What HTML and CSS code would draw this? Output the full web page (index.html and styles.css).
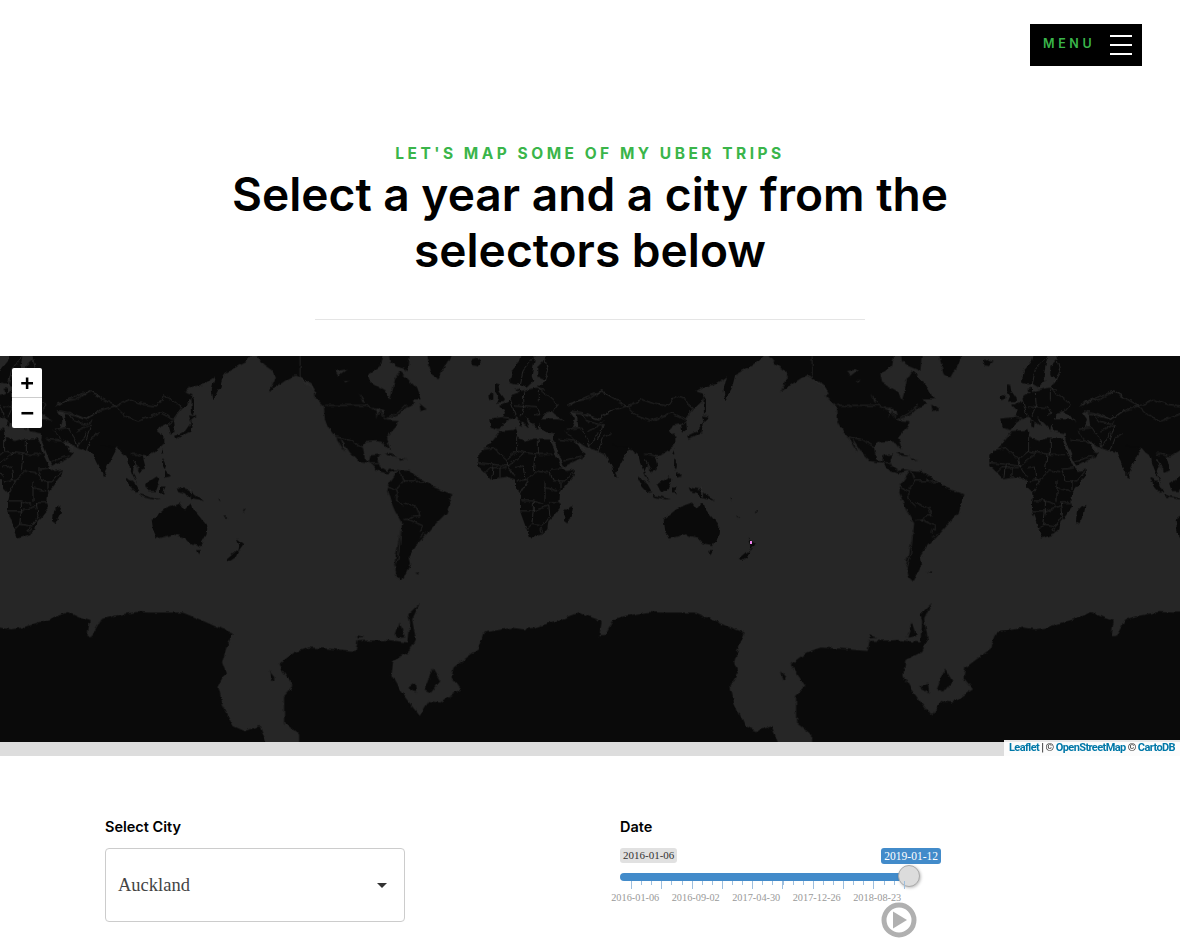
FILE: index.html
```html
<!DOCTYPE html>
<html>
<head>
<title>Uber trips</title>
<link rel="stylesheet" href="styles.css">
</head>
<body>

<div class="topbar">
  <div class="menu-btn">
    <span class="menu-label">MENU</span>
    <span class="burger"><i></i><i></i><i></i></span>
  </div>
</div>

<div class="intro">
  <div class="eyebrow">LET'S MAP SOME OF MY UBER TRIPS</div>
  <h1>Select a year and a city from the<br>selectors below</h1>
  <div class="rule"></div>
</div>

<div class="map">
  <svg class="world" viewBox="0 0 3540 1158" width="1180" height="386">
    <defs>
      <filter id="coast" filterUnits="userSpaceOnUse" x="-60" y="-60" width="3660" height="1300" color-interpolation-filters="sRGB">
        <feTurbulence type="fractalNoise" baseFrequency=".05" numOctaves="3" seed="4" result="noise"/>
        <feDisplacementMap in="SourceGraphic" in2="noise" scale="14" xChannelSelector="R" yChannelSelector="G"/>
        <feGaussianBlur stdDeviation="1"/>
      </filter>
      <g id="tile">
        <!-- antarctica -->
        <g transform="scale(1.129 1)" class="land">
          <path d="M-3,815 L30,820 L60,815 L100,800 L130,790 L180,768 L210,785 L238,795 L232,840 L245,840 L270,790 L300,780 L360,768 L400,770 L485,770 L530,790 L570,810 L618,830 L600,880 L590,920 L600,950 L580,990 L590,1040 L620,1110 L650,1125 L690,1110 L720,1200 L-3,1200 Z"/>
          <path d="M795,1200 L795,1135 L755,1100 L755,1020 L780,990 L740,925 L782,890 L820,875 L870,878 L945,885 L950,855 L1030,852 L1085,860 L1090,800 L1085,775 L1115,742 L1095,790 L1105,850 L1090,885 L1045,912 L1040,960 L1060,1000 L1115,1080 L1140,1035 L1170,1040 L1225,1000 L1200,965 L1205,935 L1270,880 L1285,830 L1360,815 L1362,1200 Z"/>
          <path d="M1062,800 L1075,840 L1050,845 Z"/>
          <path d="M1150,938 L1170,975 L1145,1010 L1128,1000 Z"/>
          <path d="M1085,995 L1105,980 L1108,1010 Z"/>
          <path d="M715,945 L730,965 L722,975 Z"/>
          <path d="M950,838 L970,845 L950,847 Z"/>
        </g>
        <!-- americas -->
        <g transform="translate(900 0)">
          <g class="land">
            <path d="M-145,-20 L-110,25 L-85,42 L-72,62 L-92,106 L-35,68 L-15,58 L5,68 L35,85 L50,110 L42,120 L72,150 L75,195 L95,228 L108,243 L135,288 L120,245 L150,290 L175,315 L210,320 L235,345 L262,352 L295,342 L275,340 L262,345 L240,330 L232,310 L240,295 L215,298 L210,315 L195,310 L188,270 L195,258 L225,255 L250,258 L262,275 L270,280 L258,245 L290,210 L292,195 L255,193 L300,172 L318,155 L345,145 L335,130 L365,130 L345,92 L322,68 L300,45 L285,70 L280,95 L270,130 L255,105 L210,80 L205,55 L240,30 L250,-20 Z"/>
            <path d="M265,-20 L330,-20 L325,45 L290,30 L270,15 Z"/>
            <path d="M378,-20 L395,55 L415,67 L462,-20 Z"/>
            <path d="M358,142 L380,160 L362,165 Z"/>
            <path d="M250,290 L272,292 L292,302 L265,298 Z"/>
            <path d="M296,308 L322,310 L300,314 Z"/>
            <path d="M295,342 L330,345 L355,365 L385,380 L400,395 L457,415 L440,470 L405,505 L370,545 L345,570 L325,600 L330,625 L305,675 L290,660 L283,625 L295,560 L305,500 L285,465 L262,410 L265,385 Z"/>
            <path d="M345,648 L360,646 L356,652 Z"/>
          </g>
          <g class="sea">
            <path d="M105,45 L140,40 L115,60 Z"/>
            <path d="M132,72 L150,72 L135,80 Z"/>
            <path d="M178,112 L195,138 L188,140 Z"/>
            <path d="M230,155 L240,155 L232,190 Z"/>
            <path d="M212,150 L250,162 L255,182 L240,165 Z"/>
          </g>
          <path class="line" d="M0,0 L0,65 L40,100 M75,148 L200,148 L235,165 L255,190 L300,165 L320,145 M108,243 L150,250 L190,275 M212,320 L235,320 M297,342 L310,375 L290,400 M310,375 L350,375 L345,368 M350,380 L385,375 M262,392 L290,405 L290,430 L310,450 M310,440 L350,455 L360,480 L340,480 L325,490 M310,490 L325,490 L370,510 L360,530 M305,500 L295,600 L285,640 M360,545 L375,530"/>
        </g>
        <!-- europe, africa, west asia -->
        <g transform="translate(1410 0)">
          <g class="land">
            <path d="M88,225 L130,222 L138,218 L142,228 L140,245 L170,255 L195,248 L240,248 L245,260 L258,300 L275,335 L288,345 L315,340 L310,360 L290,385 L270,410 L268,440 L270,455 L250,480 L235,495 L232,520 L215,535 L180,547 L170,520 L150,465 L150,440 L155,415 L135,395 L135,370 L110,362 L65,370 L45,350 L25,330 L25,295 L60,262 Z"/>
            <path d="M310,447 L305,475 L292,502 L282,495 L285,465 L300,450 Z"/>
            <path d="M58,188 L100,183 L105,165 L90,150 L115,138 L122,118 L150,108 L172,102 L200,95 L210,85 L228,70 L205,62 L205,30 L225,10 L222,-20 L560,-20 L560,270 L510,265 L480,270 L470,290 L436,355 L405,292 L390,287 L362,278 L340,268 L315,250 L335,285 L348,290 L335,305 L282,332 L250,252 L252,232 L215,225 L208,200 L205,222 L190,205 L165,180 L180,215 L140,182 L125,185 L100,203 L85,222 L62,215 Z"/>
            <path d="M120,80 L125,45 L150,15 L160,-20 L200,-20 L190,30 L185,60 L190,75 L170,95 L155,85 L135,85 Z"/>
            <path d="M135,100 L150,95 L150,110 Z"/>
            <path d="M75,82 L85,85 L88,105 L105,130 L98,138 L78,140 L85,122 L75,105 Z"/>
            <path d="M55,120 L70,112 L70,128 L58,132 Z"/>
            <path d="M0,15 L20,8 L35,15 L20,30 L5,28 Z"/>
            <path d="M148,195 L158,195 L156,215 L148,212 Z"/>
            <path d="M432,350 L442,362 L434,362 Z" />
          </g>
          <g class="sea">
            <path d="M215,190 L225,170 L245,165 L255,175 L285,195 L265,190 L235,190 Z"/>
            <path d="M298,165 L320,170 L325,210 L305,215 L315,190 Z"/>
          </g>
          <path class="line" d="M88,230 L60,262 M140,245 L140,285 L110,310 M205,250 L205,295 L250,295 M140,285 L165,290 L205,295 M195,295 L190,345 M110,310 L115,335 M110,310 L70,275 L40,280 L25,295 M25,320 L70,325 L115,330 L165,290 M115,330 L135,360 M135,335 L160,330 L165,370 M140,375 L175,370 L200,345 L235,350 M240,340 L280,335 M240,345 L250,375 L285,375 L310,345 M270,400 L270,375 M225,395 L265,405 M225,375 L225,435 M150,415 L175,372 M155,435 L190,435 L220,445 M150,465 L190,465 L190,435 M190,465 L235,450 M268,440 L235,440 L240,480 M190,465 L185,505 L220,510 L240,480 M170,520 L185,505 M45,350 L60,335 L110,335 M65,370 L70,325 M90,365 L90,335"/>
          <circle class="line" cx="215" cy="522" r="5"/>
          <path class="line" d="M100,183 L125,188 M120,125 L130,160 L135,178 M160,108 L162,145 M205,100 L205,135 M135,150 L200,155 L210,175 L195,180 M165,145 L150,180 M205,95 L265,145 L250,165 M200,95 L225,100 M150,90 L160,40 L195,0 M225,10 L235,50 L215,85 M295,150 L320,135 L355,130 L395,105 L440,130 L465,150 M305,170 L335,175 L385,190 L420,165 L465,150 M335,175 L350,195 L385,205 L400,195 M290,220 L330,215 L355,255 L360,275 M385,230 L360,270 M285,225 L310,250 M265,250 L310,255 L345,280 M280,315 L335,300 M355,225 L400,205 L385,250 M385,285 L400,245 L425,230 M430,240 L470,265 L510,265"/>
        </g>
        <!-- east asia, oceania -->
        <g transform="translate(1536 0)">
          <g class="land">
            <path d="M300,-20 L770,-20 L735,18 L700,38 L670,55 L660,95 L640,133 L635,100 L645,62 L610,85 L575,92 L552,106 L578,115 L570,135 L545,160 L522,190 L525,225 L510,232 L503,205 L480,208 L470,225 L490,240 L490,265 L465,285 L440,300 L428,300 L438,340 L418,348 L405,325 L398,345 L412,385 L395,350 L385,322 L380,300 L365,290 L352,275 L300,265 Z"/>
            <path d="M574,118 L582,130 L582,170 L576,175 Z"/>
            <path d="M570,178 L590,182 L575,195 Z"/>
            <path d="M576,195 L572,225 L530,248 L525,240 L555,225 Z"/>
            <path d="M488,280 L490,292 L484,292 Z"/>
            <path d="M487,310 L495,325 L492,340 L486,330 Z"/>
            <path d="M495,345 L510,360 L495,365 Z"/>
            <path d="M378,365 L400,375 L418,408 L408,410 L390,390 Z"/>
            <path d="M435,385 L470,362 L478,370 L465,405 L445,405 Z"/>
            <path d="M420,415 L455,425 L480,430 L460,430 L425,422 Z"/>
            <path d="M480,392 L497,392 L490,405 L495,412 L480,412 Z"/>
            <path d="M530,395 L565,400 L590,420 L612,435 L590,430 L565,425 L555,412 L535,405 Z"/>
            <path d="M312,350 L318,362 L312,364 Z"/>
            <path d="M455,490 L500,455 L540,440 L555,460 L575,440 L580,460 L622,510 L620,535 L600,570 L575,565 L555,545 L520,535 L470,548 L460,525 Z"/>
            <path d="M588,582 L603,582 L596,597 Z"/>
            <path d="M710,548 L730,565 L715,585 L718,568 Z"/>
            <path d="M680,610 L715,580 L705,605 L690,615 Z"/>
            <path d="M672,478 L682,486 L678,488 Z"/>
            <path d="M728,466 L738,460 L732,468 Z"/>
            <path d="M655,428 L662,432 L658,434 Z"/>
          </g>
          <path class="line" d="M170,145 L230,120 L270,105 L310,130 L345,150 M180,165 L210,170 L260,190 L295,165 L345,150 L375,180 L415,195 L480,170 M345,150 L390,130 L430,145 L470,150 L490,120 L515,130 L545,155 L520,190 L480,170 M395,295 L410,295 L430,300 M400,310 L415,340 M500,210 L520,195 M572,395 L572,425"/>
        </g>
      </g>
    </defs>
    <rect class="sea" width="3540" height="1158"/>
    <g filter="url(#coast)">
      <use href="#tile" x="-1536"/>
      <use href="#tile" x="0"/>
      <use href="#tile" x="1536"/>
      <use href="#tile" x="3072"/>
    </g>
    <rect class="trip" x="2250" y="555" width="6" height="9"/>
  </svg>

  <div class="zoom-ctl">
    <a class="zoom-btn zoom-in">+</a>
    <a class="zoom-btn">&minus;</a>
  </div>
  <div class="attrib"><a>Leaflet</a> | &copy; <a>OpenStreetMap</a> &copy; <a>CartoDB</a></div>
</div>

<div class="controls">
  <div class="field">
    <label>Select City</label>
    <div class="select-box">
      <span>Auckland</span>
      <i class="caret"></i>
    </div>
  </div>
  <div class="field">
    <label>Date</label>
    <div class="slider">
      <div class="slider-tops">
        <span class="tag">2016-01-06</span>
        <span class="tag tag-on">2019-01-12</span>
      </div>
      <div class="track"><span class="handle"></span></div>
      <div class="ticks"></div>
      <div class="tick-labels">
        <span>2016-01-06</span>
        <span>2016-09-02</span>
        <span>2017-04-30</span>
        <span>2017-12-26</span>
        <span>2018-08-23</span>
      </div>
      <svg class="play" viewBox="0 0 36 36" width="36" height="36">
        <circle cx="18" cy="18" r="15" fill="none" stroke="#b0b0b0" stroke-width="5"/>
        <path d="M12,9.5 L26,18 L12,26.5 Z" fill="#b0b0b0"/>
      </svg>
    </div>
  </div>
</div>

</body>
</html>
```

FILE: styles.css
```css
body { margin: 0; background-color: #fff; font-family: 'Inter', 'Liberation Sans', sans-serif; color: #000; overflow-x: hidden; }

.topbar { display: flex; justify-content: flex-end; padding: 24px 38px 0 0; }
.menu-btn { display: flex; align-items: center; justify-content: space-between; width: 112px; height: 42px; padding: 0 10px 0 13px; box-sizing: border-box; background-color: #000; }
.menu-label { margin-bottom: 4px; color: #3ab54a; font-size: 12.5px; font-weight: 600; letter-spacing: 3.6px; }
.burger { display: flex; flex-direction: column; gap: 7px; }
.burger i { display: block; width: 22px; height: 2px; background-color: #fff; }

.intro { text-align: center; padding-top: 79px; }
.eyebrow { color: #3ab54a; font-size: 15.5px; font-weight: 700; letter-spacing: 3.5px; line-height: 18px; }
h1 { margin: 3px 0 0 0; font-size: 46.1px; font-weight: 600; line-height: 56px; }
.rule { width: 550px; height: 1px; margin: 41px auto 36px auto; background-color: #e5e5e5; }

.map { position: relative; height: 400px; background-color: #ddd; overflow: hidden; }
.world { display: block; }
.land { fill: #0a0a0a; }
.sea { fill: #262626; }
.line { fill: none; stroke: #333; stroke-width: 2.2; }
.trip { fill: #ee82ee; }

.zoom-ctl { position: absolute; top: 12px; left: 12px; width: 30px; border-radius: 2px; background-color: #fff; overflow: hidden; }
.zoom-btn { display: block; height: 30px; text-align: center; font-family: 'DejaVu Sans Mono', monospace; font-size: 22px; font-weight: bold; line-height: 30px; color: #000; }
.zoom-in { height: 29px; border-bottom: 1px solid #ccc; }

.attrib { position: absolute; right: 0; top: 384px; height: 16px; padding: 0 5px; background-color: rgba(255, 255, 255, .9); font-family: 'Roboto', sans-serif; font-size: 11px; font-weight: bold; letter-spacing: -.6px; line-height: 16px; color: #333; }
.attrib a { color: #0078a8; }

.controls { display: flex; gap: 215px; padding: 63px 0 0 105px; }
.field { width: 300px; }
.field label { display: block; height: 29px; font-size: 14.5px; font-weight: 600; line-height: 15px; }

.select-box { display: flex; align-items: center; justify-content: space-between; height: 74px; padding: 0 17px 0 12px; box-sizing: border-box; border: 1px solid #ccc; border-radius: 4px; font-family: 'Liberation Serif', serif; font-size: 18.5px; color: #444; }
.caret { width: 0; height: 0; border-top: 5px solid #333; border-left: 5.5px solid transparent; border-right: 5.5px solid transparent; }

.slider { width: 321px; font-family: 'Liberation Serif', serif; }
.slider-tops { display: flex; justify-content: space-between; align-items: flex-start; height: 21px; }
.tag { height: 15px; padding: 0 3px; border-radius: 3px; background-color: #e1e1e1; font-size: 11px; line-height: 15px; color: #333; }
.tag-on { height: 16px; padding: 0 3px; background-color: #428bca; font-size: 11.5px; line-height: 16px; color: #fff; }
.track { position: relative; width: 288px; height: 8px; border-radius: 4px 0 0 4px; background-color: #428bca; margin-top: 4px; }
.handle { position: absolute; left: 278px; top: -8px; width: 22px; height: 22px; box-sizing: border-box; border: 1px solid #aaa; border-radius: 50%; background-color: #dcdcdc; box-shadow: 1px 1px 3px rgba(0, 0, 0, .25); }
.ticks { width: 275px; height: 8px; margin-left: 11px; background-image: repeating-linear-gradient(90deg, #9dbfdf 0, #9dbfdf 1px, transparent 1px, transparent 10.1px); background-size: 100% 4px; background-repeat: no-repeat; position: relative; }
.ticks::after { content: ""; display: block; height: 8px; background-image: repeating-linear-gradient(90deg, #9dbfdf 0, #9dbfdf 1px, transparent 1px, transparent 30.3px); }
.tick-labels { display: flex; margin: 3px 0 0 -15px; width: 320px; font-size: 10.3px; line-height: 12px; color: #999; }
.tick-labels span { width: 60.5px; text-align: center; flex: none; }
.play { display: block; margin: -2px 0 0 261px; }
```
